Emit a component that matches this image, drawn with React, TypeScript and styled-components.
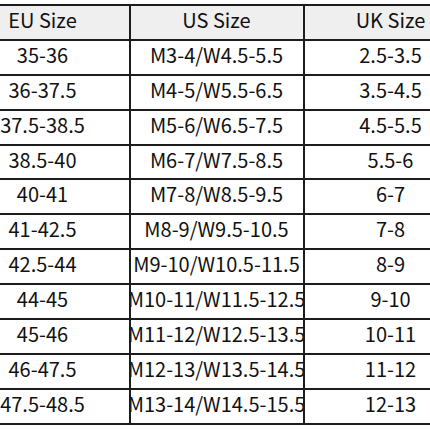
import React from 'react'
import styled, { createGlobalStyle } from 'styled-components'

const GlobalStyle = createGlobalStyle`
    html, body {
        margin: 0;
        padding: 0;
        background: #ffffff;
        overflow: hidden;
    }
    body {
        width: 430px;
        height: 430px;
    }
`

const rows: [string, string, string][] = [
    ['35-36', 'M3-4/W4.5-5.5', '2.5-3.5'],
    ['36-37.5', 'M4-5/W5.5-6.5', '3.5-4.5'],
    ['37.5-38.5', 'M5-6/W6.5-7.5', '4.5-5.5'],
    ['38.5-40', 'M6-7/W7.5-8.5', '5.5-6'],
    ['40-41', 'M7-8/W8.5-9.5', '6-7'],
    ['41-42.5', 'M8-9/W9.5-10.5', '7-8'],
    ['42.5-44', 'M9-10/W10.5-11.5', '8-9'],
    ['44-45', 'M10-11/W11.5-12.5', '9-10'],
    ['45-46', 'M11-12/W12.5-13.5', '10-11'],
    ['46-47.5', 'M12-13/W13.5-14.5', '11-12'],
    ['47.5-48.5', 'M13-14/W14.5-15.5', '12-13'],
]

export default function App() {
    return (
        <>
            <GlobalStyle />
            <Page>
                <Table>
                    <Cell header>EU Size</Cell>
                    <Cell header>US Size</Cell>
                    <Cell header>UK Size</Cell>
                    {rows.map(([eu, us, uk]) => (
                        <React.Fragment key={eu}>
                            <Cell>{eu}</Cell>
                            <Cell>{us}</Cell>
                            <Cell>{uk}</Cell>
                        </React.Fragment>
                    ))}
                </Table>
            </Page>
        </>
    )
}

const Page = styled.div`
    width: 430px;
    height: 430px;
    overflow: hidden;
    padding-top: 4px;
    box-sizing: border-box;
`

// tracks include the cell borders, so pitch is 174 x 34.9
const Table = styled.div`
    display: grid;
    grid-template-columns: repeat(3, 174px);
    grid-auto-rows: 34.9px;
    width: max-content;
    margin-left: -45.5px;
    border-top: 2px solid #1c1c1c;
    border-left: 2px solid #1c1c1c;
`

const Cell = styled.div<{ header?: boolean }>`
    display: flex;
    align-items: center;
    justify-content: center;
    overflow: hidden;
    white-space: nowrap;
    border-right: 2px solid #1c1c1c;
    border-bottom: 2px solid #1c1c1c;
    background: ${({ header }) => (header ? '#efefef' : '#ffffff')};
    color: #111111;
    font-family: 'Noto Sans CJK SC', 'Noto Sans', sans-serif;
    font-size: 20px;
    line-height: 1;
    padding-bottom: 5px;
`
